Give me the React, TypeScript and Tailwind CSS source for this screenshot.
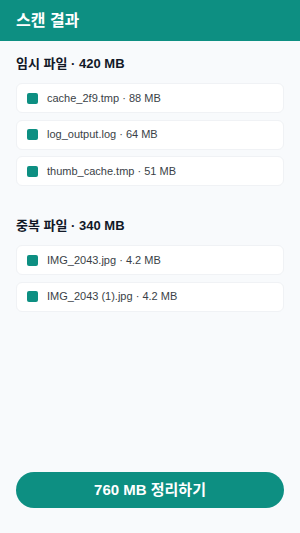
const temp = [
  { name: 'cache_2f9.tmp', size: '88 MB' },
  { name: 'log_output.log', size: '64 MB' },
  { name: 'thumb_cache.tmp', size: '51 MB' },
];

const dupes = [
  { name: 'IMG_2043.jpg', size: '4.2 MB' },
  { name: 'IMG_2043 (1).jpg', size: '4.2 MB' },
];

const font = { fontFamily: '"Liberation Sans", "Noto Sans CJK KR", sans-serif' };

function FileRow({ name, size }: { name: string; size: string }) {
  return (
    <div className="h-[30px] flex items-center bg-white rounded-md border border-[#f0f2f5] pl-[10px]">
      <span className="w-[11px] h-[11px] rounded-[2px] bg-[#0d8f82] mr-[9px]" />
      <span className="text-[11px] text-[#3a3f47]">
        {name} · {size}
      </span>
    </div>
  );
}

function Section({ title, items }: { title: string; items: { name: string; size: string }[] }) {
  return (
    <section>
      <h2 className="text-[13px] leading-5 font-bold text-[#111827] mb-[9px]">{title}</h2>
      <div className="flex flex-col gap-[6.5px]">
        {items.map((f) => (
          <FileRow key={f.name} {...f} />
        ))}
      </div>
    </section>
  );
}

export default function App() {
  return (
    <div className="min-h-screen flex flex-col bg-[#f8fafc]" style={font}>
      <header className="h-[41px] bg-[#0d8f82] flex items-center px-4">
        <h1 className="text-white text-[16px] font-bold">스캔 결과</h1>
      </header>

      <main className="flex-1 px-4 pt-[13px] flex flex-col gap-[30px]">
        <Section title="임시 파일 · 420 MB" items={temp} />
        <Section title="중복 파일 · 340 MB" items={dupes} />
      </main>

      <div className="px-4 pb-[25px]">
        <button className="w-full h-[36px] rounded-full bg-[#0d8f82] text-white text-[15px] font-bold">
          760 MB 정리하기
        </button>
      </div>
    </div>
  );
}
